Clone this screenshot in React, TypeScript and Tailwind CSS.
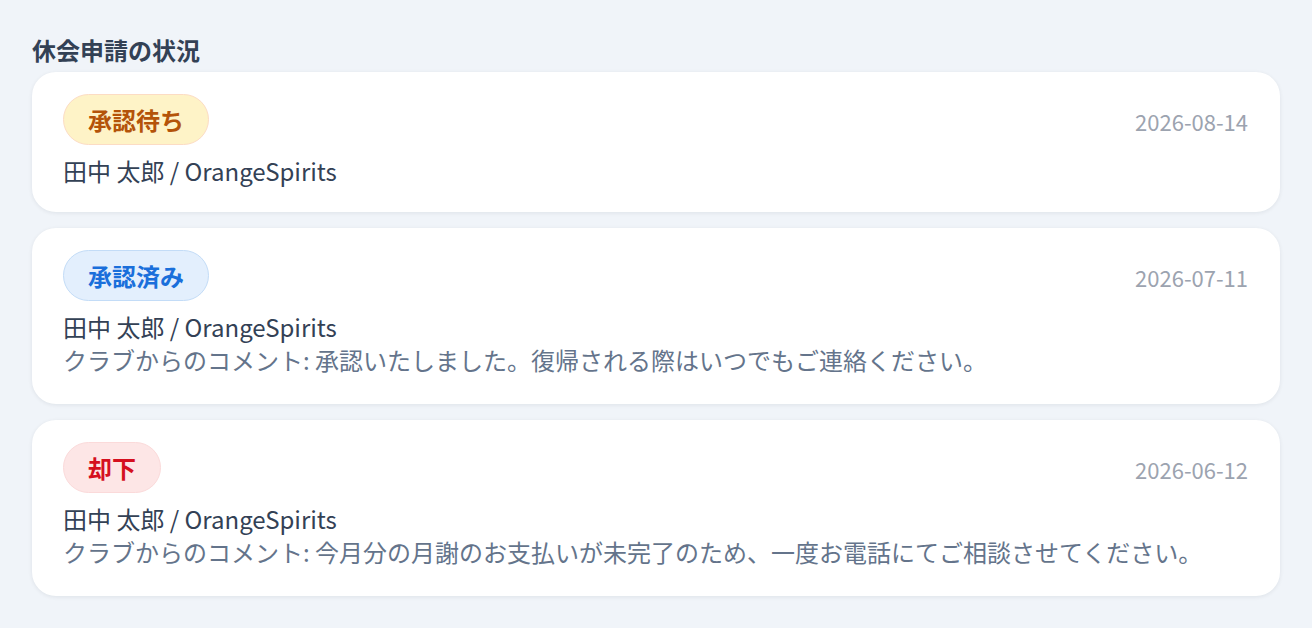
import React from 'react';

type Status = 'pending' | 'approved' | 'rejected';

interface Request {
  id: number;
  status: Status;
  date: string;
  member: string;
  club: string;
  comment?: string;
}

const requests: Request[] = [
  { id: 1, status: 'pending', date: '2026-08-14', member: '田中 太郎', club: 'OrangeSpirits' },
  {
    id: 2,
    status: 'approved',
    date: '2026-07-11',
    member: '田中 太郎',
    club: 'OrangeSpirits',
    comment: '承認いたしました。復帰される際はいつでもご連絡ください。',
  },
  {
    id: 3,
    status: 'rejected',
    date: '2026-06-12',
    member: '田中 太郎',
    club: 'OrangeSpirits',
    comment: '今月分の月謝のお支払いが未完了のため、一度お電話にてご相談させてください。',
  },
];

const badgeStyles: Record<Status, { label: string; className: string }> = {
  pending: { label: '承認待ち', className: 'bg-[#fef3c7] border-[#fcdcc4] text-[#b45309]' },
  approved: { label: '承認済み', className: 'bg-[#e3effd] border-[#c3dcf7] text-[#1a6fdb]' },
  rejected: { label: '却下', className: 'bg-[#fde6e6] border-[#fbdada] text-[#d5101f]' },
};

function StatusBadge({ status }: { status: Status }) {
  const badge = badgeStyles[status];
  return (
    <span
      className={`inline-flex items-center h-[51px] px-6 rounded-full border text-[24px] font-semibold ${badge.className}`}
    >
      {badge.label}
    </span>
  );
}

export default function App() {
  return (
    <div
      className="min-h-screen bg-[#f0f4f9] px-8 pt-[34px] pb-8"
      style={{ fontFamily: '"Noto Sans CJK JP", "Noto Sans", sans-serif' }}
    >
      <h2 className="text-[24px] font-bold text-[#334155] leading-[32px] mb-[6px]">休会申請の状況</h2>
      <div className="flex flex-col gap-4">
        {requests.map((r) => (
          <div
            key={r.id}
            className="bg-white rounded-[24px] shadow-[0_1px_4px_rgba(15,23,42,0.08)] pl-[31px] pr-8 pt-[22px] pb-[25px]"
          >
            <div className="flex items-center justify-between">
              <StatusBadge status={r.status} />
              <span className="mt-1 text-[22px] text-[#9ca3af]">{r.date}</span>
            </div>
            <p className="mt-[9px] text-[24px] leading-[33px] text-[#334155]">
              {r.member} / {r.club}
            </p>
            {r.comment && (
              <p className="mb-[3px] text-[24px] leading-[33px] text-[#64748b]">
                クラブからのコメント: {r.comment}
              </p>
            )}
          </div>
        ))}
      </div>
    </div>
  );
}
